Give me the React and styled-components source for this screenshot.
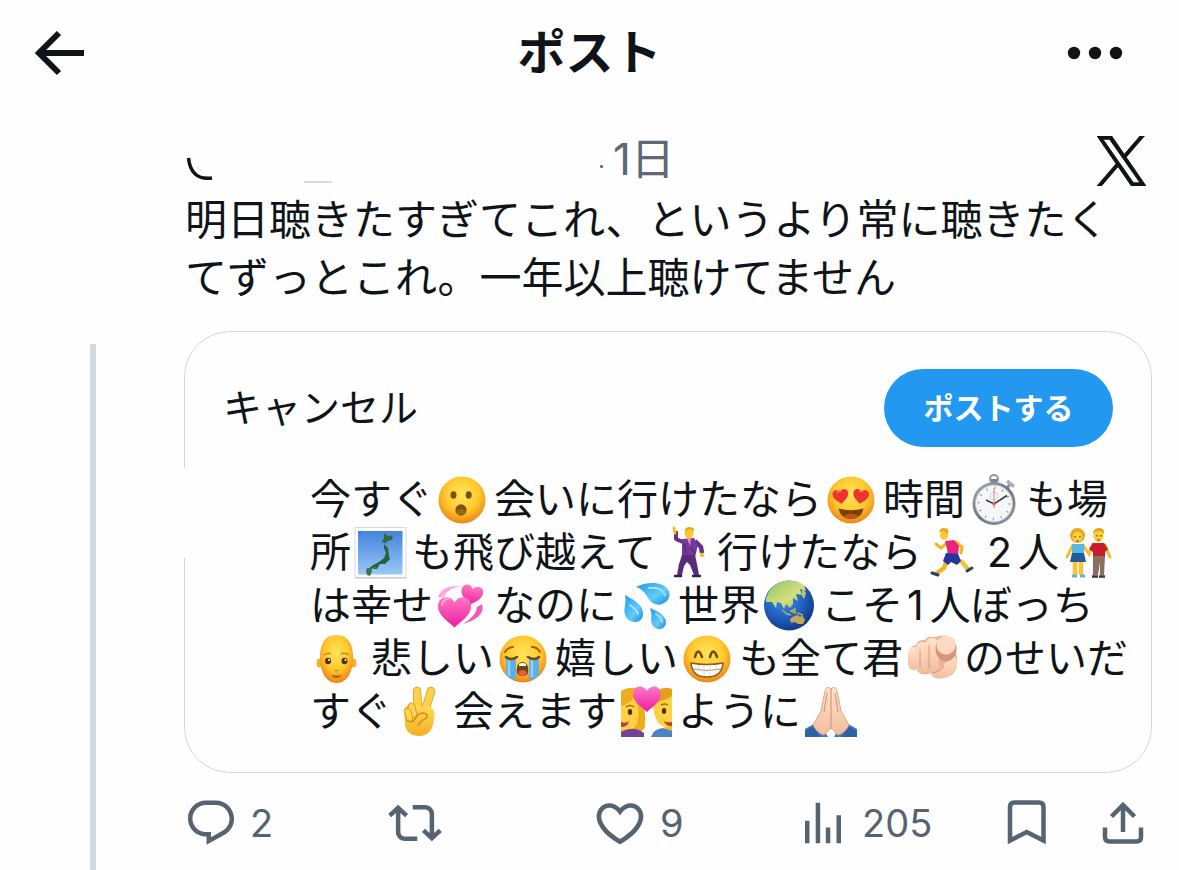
import React from "react"
import styled, { createGlobalStyle } from "styled-components"

const GlobalStyle = createGlobalStyle`
    * {
        box-sizing: border-box;
    }

    body {
        margin: 0;
        background: #fefefe;
        color: #0f1419;
        font-family: Inter, "Noto Sans CJK JP", sans-serif;
    }
`

const Page = styled.div`
    display: flex;
    flex-direction: column;
    min-height: 100vh;
`

const Header = styled.header`
    display: grid;
    grid-template-columns: 1fr auto 1fr;
    align-items: center;
    height: 106px;
    padding: 0 35px;
`

const Title = styled.h1`
    margin: 0;
    font-size: 48px;
    line-height: 58px;
    font-weight: 700;
`

const IconButton = styled.button`
    display: flex;
    align-items: center;
    gap: 12px;
    justify-self: ${props => props.$end ? "end" : "start"};
    margin: 0;
    padding: 0 ${props => props.$end ? "20px" : "0"} 0 0;
    border: 0;
    background: none;
    color: inherit;
    font: inherit;
    cursor: pointer;

    svg {
        display: block;
        flex: none;
    }
`

const Post = styled.article`
    display: flex;
    flex: 1;
    padding-right: 27px;
`

const ThreadColumn = styled.div`
    display: flex;
    flex: none;
    width: 184px;
    padding: 238px 0 0 90px;
`

const ThreadLine = styled.div`
    width: 6px;
    background: #cfd9e0;
`

const Content = styled.div`
    flex: 1;
    min-width: 0;
    padding: 25px 0 19px;
`

const Byline = styled.div`
    display: flex;
    align-items: center;
    height: 60px;
    padding-right: 6px;
    color: #5b6875;
`

const Author = styled.a`
    flex: none;
    width: 414px;
    color: #0f1419;

    svg {
        display: block;
    }
`

const Time = styled.time`
    flex: 1;
    padding-top: 4px;
    font-size: 44px;
    line-height: 56px;
`

const Dot = styled.span`
    margin-right: 8px;
    font-size: 24px;
`

const Body = styled.p`
    margin: 0;
    padding-left: 1px;
    font-size: 42px;
    line-height: 58px;
    white-space: nowrap;
`

const Card = styled.section`
    position: relative;
    margin-top: 24px;
    padding: 37px 0 34px;
    border: 1px solid #d3d6e2;
    border-radius: 46px;
`

const BorderGap = styled.span`
    position: absolute;
    top: 136px;
    left: -2px;
    width: 4px;
    height: 90px;
    background: #fefefe;
`

const CardHeader = styled.div`
    display: flex;
    align-items: center;
    justify-content: space-between;
    padding: 0 38px;
`

const CancelButton = styled.button`
    padding: 0;
    border: 0;
    background: none;
    color: inherit;
    font: inherit;
    font-size: 39px;
    line-height: 58px;
    cursor: pointer;
`

const SubmitButton = styled.button`
    width: 229px;
    height: 78px;
    padding: 0 0 4px;
    border: 0;
    border-radius: 39px;
    background: #2398f0;
    color: #fff;
    font: inherit;
    font-size: 30px;
    font-weight: 700;
    cursor: pointer;
`

const Draft = styled.div`
    margin-top: 26px;
    padding-left: 125px;
    font-size: 41px;
    line-height: 53px;
`

const DraftLine = styled.div`
    display: flex;
    align-items: center;
    height: 53px;
    white-space: nowrap;
`

const Digit = styled.span`
    padding: 0 6px 0 4px;
`

const EmojiSvg = styled.svg`
    flex: none;
    width: 52px;
    height: 52px;
    margin: 0 5px 0 4px;
    overflow: visible;
`

const Defs = styled.svg`
    position: absolute;
    width: 0;
    height: 0;
`

const Actions = styled.div`
    display: grid;
    grid-template-columns: 204fr 204fr 204fr 204fr 96fr 56fr;
    align-items: center;
    height: 56px;
    margin-top: 22px;
    color: #566370;
    font-size: 38px;
`

const Emoji = ({ label, children }) =>
    <EmojiSvg viewBox="0 0 52 52" role="img" aria-label={label}>{children}</EmojiSvg>

const HEART = "M0 -5C-3 -12 -14 -11 -14 -2C-14 6 -5 11 0 16C5 11 14 6 14 -2C14 -11 3 -12 0 -5Z"

const EmojiDefs = () =>
    <Defs aria-hidden="true">
        <defs>
            <radialGradient id="face" cx="50%" cy="38%" r="60%">
                <stop offset="0" stopColor="#ffe55c" />
                <stop offset=".6" stopColor="#ffc92e" />
                <stop offset="1" stopColor="#ef8a18" />
            </radialGradient>
            <linearGradient id="gold" x1="0" y1="0" x2="0" y2="1">
                <stop offset="0" stopColor="#ffdb57" />
                <stop offset="1" stopColor="#f2b01f" />
            </linearGradient>
            <linearGradient id="sky" x1="0" y1="0" x2="0" y2="1">
                <stop offset="0" stopColor="#4483db" />
                <stop offset="1" stopColor="#9ac9f7" />
            </linearGradient>
            <linearGradient id="pink" x1="0" y1="0" x2="0" y2="1">
                <stop offset="0" stopColor="#ff78c4" />
                <stop offset="1" stopColor="#ec1da0" />
            </linearGradient>
            <linearGradient id="water" x1="0" y1="0" x2="1" y2="1">
                <stop offset="0" stopColor="#1d9be6" />
                <stop offset=".6" stopColor="#62cbfb" />
                <stop offset="1" stopColor="#1488dc" />
            </linearGradient>
            <radialGradient id="sea" cx="40%" cy="35%" r="65%">
                <stop offset="0" stopColor="#3d93ea" />
                <stop offset=".6" stopColor="#2160c2" />
                <stop offset="1" stopColor="#153b86" />
            </radialGradient>
            <linearGradient id="land" x1="0" y1="0" x2="1" y2="1">
                <stop offset="0" stopColor="#8cc66a" />
                <stop offset=".6" stopColor="#d8df7c" />
                <stop offset="1" stopColor="#9fb65a" />
            </linearGradient>
            <linearGradient id="pale" x1="0" y1="0" x2="0" y2="1">
                <stop offset="0" stopColor="#ffe3cd" />
                <stop offset="1" stopColor="#f3bd9e" />
            </linearGradient>
            <linearGradient id="steel" x1="0" y1="0" x2="1" y2="1">
                <stop offset="0" stopColor="#a9b0b7" />
                <stop offset=".5" stopColor="#6a737b" />
                <stop offset="1" stopColor="#939aa2" />
            </linearGradient>
        </defs>
    </Defs>

const Face = () => <circle cx="25" cy="26" r="23.5" fill="url(#face)" />

const Surprised = () =>
    <Emoji label="😮">
        <Face />
        <ellipse cx="16.5" cy="21" rx="3" ry="3.8" fill="#76500c" />
        <ellipse cx="31.7" cy="21" rx="3" ry="3.8" fill="#76500c" />
        <ellipse cx="24" cy="36" rx="5.6" ry="5.8" fill="#7d5208" />
        <ellipse cx="24" cy="38" rx="4" ry="3" fill="#98670f" />
    </Emoji>

const HeartEyes = () =>
    <Emoji label="😍">
        <Face />
        <path d={HEART} transform="translate(14.5 21) rotate(-8) scale(.56)" fill="#f0322f" />
        <path d={HEART} transform="translate(35 21) rotate(8) scale(.56)" fill="#f0322f" />
        <path d="M11 19q1-3 4-2M33 18q2-2 4 0" fill="none" stroke="#ff7b70" strokeWidth="1.5" />
        <path d="M12.500 34.500Q25 38 37.500 34.500Q35.500 45 25 45Q14.500 45 12.500 34.500Z" fill="#754306" />
        <path d="M17 42Q25 37.500 33 42Q25 47 17 42Z" fill="#c25220" />
    </Emoji>

const Stopwatch = () =>
    <Emoji label="⏱️">
        <circle cx="25" cy="5" r="4" fill="none" stroke="#9198a0" strokeWidth="2" />
        <path d="M22 5h6v5h-6z" fill="#7d848c" />
        <path d="M38 14l4-5" stroke="#858d95" strokeWidth="3" />
        <path d="M39 5.500l7 5.500-2 3-7-5.500z" fill="#a8afb6" />
        <circle cx="25" cy="29.500" r="21.500" fill="url(#steel)" />
        <circle cx="25" cy="29.500" r="18.500" fill="#f5f6f7" stroke="#bfc4ca" />
        <circle cx="25" cy="29.500" r="15.500" fill="none" stroke="#8b9094" strokeWidth="2.500" strokeDasharray="1 7.115" />
        <circle cx="25" cy="22" r="4" fill="none" stroke="#d2d5d9" />
        <path d="M25 34V14" stroke="#e77c68" strokeWidth="1" />
        <path d="M17 26l8 4 13-8.500" fill="none" stroke="#33383d" strokeWidth="1.500" />
        <circle cx="25" cy="30" r="1.600" fill="#d36b4b" />
    </Emoji>

const MapOfJapan = () =>
    <Emoji label="🗾">
        <rect x="0" y=".5" width="51" height="50" fill="#fff" stroke="#d7d9dd" />
        <path d="M0 51h51" stroke="#bfc3c8" />
        <rect x="3" y="4" width="44.500" height="43.500" fill="url(#sky)" />
        <path d="M29 6l4 3 5-.5-1 4-5 2-2 2-3-2 2-3z" fill="#2f6b3c" />
        <path d="M29 17l4 4 1 8 1 3-5 5-5 0-3 5-4-1-4 3-2-1 6-5 6-3 5-4 2-5-2-5z" fill="#28623b" />
        <path d="M12 41l4 0 1 3-2 5-3-1-1-4zM18 40l4-1-1 3-3 0z" fill="#37764a" />
    </Emoji>

const Dancer = () =>
    <Emoji label="🕺">
        <g strokeLinejoin="round">
            <path d="M16 4l0 8 9 4" fill="none" stroke="#63318a" strokeWidth="4" />
            <path d="M15 6l-1-5" stroke="#f6bd28" strokeWidth="3" strokeLinecap="round" />
            <path d="M35 14l6 6 1 6" fill="none" stroke="#63318a" strokeWidth="4.500" />
            <circle cx="42" cy="28" r="2.200" fill="#f6bd28" />
            <path d="M22 12l12-1 4 7-3 12H22z" fill="#70399a" />
            <path d="M27 11l4 0-1 8z" fill="#ed8bd0" />
            <path d="M22 28h13l2 9 2 11h-5l-4-10-3-3-3 4-2 9h-5l2-11z" fill="#582b7b" />
            <path d="M24 17l2 9M31 20l4 7" stroke="#4b226d" strokeWidth="1" />
            <path d="M15 49h6M33 49h7" stroke="#39213d" strokeWidth="2.500" strokeLinecap="round" />
            <ellipse cx="29" cy="6" rx="4.500" ry="5.500" fill="#fbc52b" />
            <path d="M25 4q0-4 5-4 5 1 4 4l-4-2z" fill="#dda715" />
        </g>
    </Emoji>

const Runner = () =>
    <Emoji label="🏃">
        <g fill="none" strokeLinejoin="round" strokeLinecap="round">
            <path d="M20 17l-5 4-5-4" stroke="#f4b322" strokeWidth="3" />
            <path d="M30 15l6 5-1 6" stroke="#f4b322" strokeWidth="3" />
            <path d="M21 33l-3 8-7 5" stroke="#f4b322" strokeWidth="4.500" />
            <path d="M29 33l7 2 6 7" stroke="#f9c136" strokeWidth="4.500" />
            <path d="M6 46l6 2M41 44l5-3" stroke="#2d3e63" strokeWidth="3" />
        </g>
        <path d="M19 14l9-1 5 6-1 9-10 0-1-6z" fill="#e72579" />
        <path d="M20 26l12 1 3 7-4 4-6-3-3 3-5-4z" fill="#25359d" />
        <ellipse cx="18" cy="8" rx="4.200" ry="4.800" fill="#ffc83b" />
        <path d="M13 5q1-4 5-4 6 0 4 6l-4-3z" fill="#eaaa17" />
    </Emoji>

const Couple = () =>
    <Emoji label="👫">
        <path d="M10 18l-6 12M20 18l6 9 4-10M42 18l5 12" fill="none" stroke="#f6bd2c" strokeWidth="3" strokeLinecap="round" />
        <path d="M12 34v14M18 34v14" stroke="#f8c339" strokeWidth="4.500" />
        <path d="M9 49h5M17 49h5" stroke="#6faecd" strokeWidth="3" />
        <circle cx="14.500" cy="8.500" r="7.500" fill="#e6aa17" />
        <ellipse cx="14.500" cy="10" rx="4.800" ry="5.500" fill="#ffcf45" />
        <path d="M9 17h12l0 10H9z" fill="#56b9e3" />
        <path d="M9 26h12l2 9H7z" fill="#225b9a" />
        <path d="M30 16h11l4 6-3 3v5H30v-5l-4-3z" fill="#c81b2b" />
        <path d="M30 29h12l-1 19h-4V35l-2 13h-5z" fill="#8d6c62" />
        <path d="M29 49.500h6M36 49.500h6" stroke="#46302c" strokeWidth="2.500" />
        <ellipse cx="35.500" cy="8.500" rx="5.200" ry="6.500" fill="#ffcb3c" />
        <path d="M30 7q0-6 6-6 6 0 5 6l-3-3-5 0z" fill="#dfa318" />
        <path d="M12 9v1.500M17 9v1.500M34 8v1.500M38 8v1.500M13 14h3M34 13h3" stroke="#6d470c" strokeWidth="1.200" />
    </Emoji>

const RevolvingHearts = () =>
    <Emoji label="💞">
        <path d="M1 17Q5 5 24 6Q9 9 7 17Z" fill="#ffa7d8" />
        <path d="M45 24Q49 37 26 44Q40 35 40 27Z" fill="#f35bb9" />
        <path d={HEART} transform="translate(35 13) rotate(12) scale(.78)" fill="url(#pink)" />
        <path d={HEART} transform="translate(17.500 28.500) scale(1.180)" fill="url(#pink)" />
        <path d="M5 25q1-6 6-6" fill="none" stroke="#ffa4db" strokeWidth="2" strokeLinecap="round" />
    </Emoji>

const SweatDrops = () =>
    <Emoji label="💦">
        <path d="M15 7C26 1 43 1 48 11C51 20 41 27 34 24C26 22 27 11 15 7Z" fill="url(#water)" />
        <path d="M4 15C13 20 23 25 22 35C21 44 9 44 5 37C1 30 6 25 4 15Z" fill="url(#water)" />
        <path d="M29 28C37 31 46 36 45 43C44 51 33 51 31 44C29 39 32 36 29 28Z" fill="url(#water)" />
        <path d="M28 8q12-2 16 7M9 25q7 5 8 9M35 34q5 3 6 8" fill="none" stroke="#a5e0fd" strokeWidth="2" strokeLinecap="round" />
    </Emoji>

const Globe = () =>
    <Emoji label="🌏">
        <circle cx="25" cy="25.500" r="25" fill="url(#sea)" />
        <path d="M2 18Q7 4 20 1Q32 0 40 5L42 11L36 9L38 15L32 14L34 21L29 18L29 24L26 28L22 24L20 29L17 23L13 22L12 28L8 22L2 22Z" fill="url(#land)" />
        <path d="M38 8l4 5-2 6-2-3z" fill="#b6cf6b" />
        <path d="M18 30l5 4 4 1M27 31l4-2 0 4zM33 33l6 2" fill="none" stroke="#a9b65b" strokeWidth="1.500" />
        <path d="M26 39l4-3 4-1 2 2 2-2 3 5-2 4-5 0-3-2-4 1z" fill="#c2a65a" />
    </Emoji>

const Bald = () =>
    <Emoji label="🧑‍🦲">
        <ellipse cx="5.500" cy="30" rx="3" ry="4.500" fill="#f3b12b" />
        <ellipse cx="39.500" cy="30" rx="3" ry="4.500" fill="#f3b12b" />
        <path d="M22.500 2C34 2 39 11 39 24C39 39 33 50 22.500 50C12 50 6 39 6 24C6 11 11 2 22.500 2Z" fill="url(#face)" />
        <ellipse cx="14" cy="28" rx="3" ry="3.300" fill="#4d3214" />
        <ellipse cx="30.500" cy="28" rx="3" ry="3.300" fill="#4d3214" />
        <circle cx="15" cy="27" r="1" fill="#fff" />
        <circle cx="31.500" cy="27" r="1" fill="#fff" />
        <path d="M10 22q4-3 7-1M27 21q4-2 8 1M20.500 37q2 1.500 4 0" fill="none" stroke="#cc8b16" strokeWidth="1.500" />
        <path d="M17.500 42q5 1 10 0-1 3-5 3t-5-3z" fill="#b15a22" />
    </Emoji>

const Crying = () =>
    <Emoji label="😭">
        <Face />
        <path d="M8 25h10v22Q12 46 8 42ZM31 25h10v17Q37 46 31 47Z" fill="#5cafe9" />
        <path d="M11 26v17M34 26v18" stroke="#90d0f8" strokeWidth="2.500" />
        <path d="M8 24q5 4 11 0M30 24q6 4 11 0" fill="none" stroke="#6f4a12" strokeWidth="2.500" strokeLinecap="round" />
        <path d="M7 19q3-5 8-5M34 14q5 0 8 5" fill="none" stroke="#9a6412" strokeWidth="2" strokeLinecap="round" />
        <path d="M24.500 29C29 29 31 34 30 40C29 44 20 44 19 40C18 34 20 29 24.500 29Z" fill="#70440b" />
        <path d="M20 39q4.500-4 9 0-1 4-4.500 4t-4.500-4z" fill="#e45a4b" />
        <path d="M21 31q3.500-2 7 0v2h-7z" fill="#fff" />
    </Emoji>

const Grinning = () =>
    <Emoji label="😁">
        <Face />
        <path d="M13 24q3-11 7 0M28 24q3-11 7 0" fill="none" stroke="#744b0c" strokeWidth="2.600" strokeLinecap="round" />
        <path d="M9 30Q25 33 41 30Q40 44 25 44Q10 44 9 30Z" fill="#fff" stroke="#8a5c18" strokeWidth="1.500" strokeLinejoin="round" />
        <path d="M11 36Q25 39 39 36" fill="none" stroke="#a99474" strokeWidth="1" />
        <path d="M16 32v9M22 33v10M28 33v10M34 32v9" stroke="#ded8cf" strokeWidth="1" />
    </Emoji>

const PointingAtViewer = () =>
    <Emoji label="🫵🏻">
        <path d="M2 21Q1 14 9 12Q10 7 18 7Q20 3 28 4Q38 0 47 6L50 25Q52 42 36 45Q25 47 24 40Q13 44 9 36Q0 34 2 21Z" fill="#eeb294" />
        <rect x="1" y="14" width="12" height="23" rx="6" fill="url(#pale)" />
        <rect x="9" y="9" width="13" height="31" rx="6" fill="url(#pale)" />
        <rect x="18" y="5" width="14" height="34" rx="7" fill="url(#pale)" />
        <path d="M25 40Q34 38 37 31L48 23Q53 34 46 41Q38 47 28 44Q24 43 25 40Z" fill="url(#pale)" />
        <ellipse cx="39" cy="16" rx="10.500" ry="12.500" fill="#d99578" />
        <ellipse cx="39" cy="12" rx="9.500" ry="9.500" fill="#ffdac2" />
        <path d="M13 17v18M22 12v24M25 40q10-1 12-8" fill="none" stroke="#d89a7c" strokeWidth="1" />
    </Emoji>

const Victory = () =>
    <Emoji label="✌️">
        <path d="M22 25L21 5M29 25L35 5" stroke="#d99c1d" strokeWidth="8.500" strokeLinecap="round" />
        <path d="M22 25L21 5M29 25L35 5" stroke="#ffd04a" strokeWidth="7" strokeLinecap="round" />
        <path d="M8 24Q10 17 17 19L33 21Q40 23 38 32Q37 49 24 50Q10 50 9 38Z" fill="url(#gold)" />
        <path d="M13 18q4-3 6 2l2 9q-2 4-6 2l-4-7z" fill="#ffd352" stroke="#d99c1d" />
        <path d="M8 24q4-4 7 1l2 8q-2 4-6 2z" fill="#ffd352" stroke="#d99c1d" />
        <path d="M11 34q5 4 8-1 4-8 11-5 3 2-1 5-5 2-7 7" fill="none" stroke="#d1921c" strokeWidth="1.600" />
    </Emoji>

const CoupleWithHeart = () =>
    <Emoji label="💑">
        <path d="M0 5Q10-1 19 4Q25 16 24 41L17 50H0Z" fill="#edae1c" />
        <path d="M0 20Q8 18 14 11Q20 24 16 38Q11 47 0 43Z" fill="#ffd045" />
        <path d="M0 46Q12 39 23 47V51H0Z" fill="#75419b" />
        <path d="M51 4Q39-1 34 10Q30 24 36 35Q41 43 51 42Z" fill="#ffd045" />
        <path d="M51 3Q37-2 33 15Q41 17 51 10Z" fill="#e1a116" />
        <path d="M30 51Q32 43 42 42L51 44V51Z" fill="#4b83c6" />
        <path d="M42 42l9 3v-6z" fill="#f5b92a" />
        <ellipse cx="9" cy="26" rx="2.200" ry="3" fill="#4f3515" />
        <ellipse cx="43" cy="25" rx="2.200" ry="3" fill="#4f3515" />
        <path d="M5 21q4-3 8 0M40 19q4-2 7 0" fill="none" stroke="#a06d14" strokeWidth="1.500" />
        <path d="M0 36q5 2 8-1-1 6-8 6zM51 36q-5 1-8-1 1 5 8 5z" fill="#b1452f" />
        <path d={HEART} transform="translate(26 10)" fill="url(#pink)" />
    </Emoji>

const Pray = () =>
    <Emoji label="🙏🏻">
        <path d="M0 43L14 35L23 51H0ZM52 43L38 35L29 51H52Z" fill="#3b78bd" />
        <path d="M0 45l9-5 6 11H0zM52 45l-9-5-6 11h15z" fill="#2c62a5" />
        <path d="M26 3Q22-1 20 5L16 25L8 39Q12 47 19 49L26 42L33 49Q40 47 44 39L36 25L32 5Q30-1 26 3Z" fill="url(#pale)" stroke="#dfa384" />
        <path d="M26 3V42M22 7l-3 19M30 7l3 19" fill="none" stroke="#d79878" strokeWidth="1.200" />
    </Emoji>

const BackArrow = () =>
    <svg width="50" height="46" viewBox="0 0 50 46" fill="none" stroke="currentColor" strokeWidth="6">
        <path d="M24 3L4 23L24 43M4 23H49" />
    </svg>

const MoreDots = () =>
    <svg width="58" height="14" viewBox="0 0 58 14" fill="currentColor">
        <circle cx="8" cy="7" r="6.200" />
        <circle cx="29" cy="7" r="6.200" />
        <circle cx="50" cy="7" r="6.200" />
    </svg>

const XLogo = () =>
    <svg width="49" height="50" viewBox="0 0 1200 1227" fill="#0f1419" stroke="#0f1419" strokeWidth="24" role="img" aria-label="X">
        <path d="M714.163 519.284L1160.89 0H1055.03L667.137 450.887L357.328 0H0L468.492 681.821L0 1226.37H105.866L515.491 750.218L842.672 1226.37H1200L714.137 519.284H714.163ZM569.165 687.828L521.697 619.934L144.011 79.6944H306.615L611.412 515.685L658.88 583.579L1055.08 1150.3H892.476L569.165 687.854V687.828Z" />
    </svg>

const NameMark = () =>
    <svg width="150" height="60" viewBox="0 0 150 60" fill="none">
        <path d="M4.500 27C6 41 13 49 28 47" stroke="currentColor" strokeWidth="3.500" />
        <path d="M13 36l4 4" stroke="#ddd" />
        <path d="M120 51h28" stroke="#d8d9db" strokeWidth="2" />
    </svg>

const ICONS = {
    reply: "M1.751 10c0-4.42 3.584-8 8.005-8h4.366c4.49 0 8.129 3.64 8.129 8.13 0 2.96-1.607 5.68-4.196 7.11l-8.054 4.46v-3.69h-.067c-4.49.1-8.183-3.51-8.183-8.01zm8.005-6c-3.317 0-6.005 2.69-6.005 6 0 3.37 2.77 6.08 6.138 6.01l.351-.01h1.761v2.3l5.087-2.81c1.951-1.08 3.163-3.13 3.163-5.36 0-3.39-2.744-6.13-6.129-6.13H9.756z",
    repost: "M4.5 3.88l4.432 4.14-1.364 1.46L5.5 7.55V16c0 1.1.896 2 2 2H13v2H7.5c-2.209 0-4-1.79-4-4V7.55L1.432 9.48.068 8.02 4.5 3.88zM16.5 6H11V4h5.5c2.209 0 4 1.79 4 4v8.45l2.068-1.93 1.364 1.46-4.432 4.14-4.432-4.14 1.364-1.46 2.068 1.93V8c0-1.1-.896-2-2-2z",
    like: "M16.697 5.5c-1.222-.06-2.679.51-3.89 2.16l-.805 1.09-.806-1.09C9.984 6.01 8.526 5.44 7.304 5.5c-1.243.07-2.349.78-2.91 1.91-.552 1.12-.633 2.78.479 4.82 1.074 1.97 3.257 4.27 7.129 6.61 3.87-2.34 6.052-4.64 7.126-6.61 1.111-2.04 1.03-3.7.477-4.82-.561-1.13-1.666-1.84-2.908-1.91zm4.187 7.69c-1.351 2.48-4.001 5.12-8.379 7.67l-.503.3-.504-.3c-4.379-2.55-7.029-5.19-8.382-7.67-1.36-2.5-1.41-4.86-.514-6.67.887-1.79 2.647-2.91 4.601-3.01 1.651-.09 3.368.56 4.798 2.01 1.429-1.45 3.146-2.1 4.796-2.01 1.954.1 3.714 1.22 4.601 3.01.896 1.81.846 4.17-.514 6.67z",
    views: "M8.75 21V3h2v18h-2zM18 21V8.5h2V21h-2zM4 21l.004-10h2L6 21H4zm9.248 0v-7h2v7h-2z"
}

const Icon = ({ name, size = 54 }) =>
    <svg width={size} height={size} viewBox="0 0 24 24" fill="currentColor">
        <path d={ICONS[name]} />
    </svg>

const BookmarkIcon = () =>
    <svg width="54" height="54" viewBox="0 0 54 54" fill="none" stroke="currentColor" strokeWidth="4.500">
        <path d="M10 44.500V11Q10 6.500 14.500 6.500H39Q43.500 6.500 43.500 11V44.500L26.750 36Z" />
    </svg>

const ShareIcon = () =>
    <svg width="54" height="54" viewBox="0 0 54 54" fill="none" stroke="currentColor" strokeWidth="4.500">
        <path d="M27 36V9M15.500 20.500L27 9L38.500 20.500M9 31.500V41Q9 45.500 13.500 45.500H40.500Q45 45.500 45 41V31.500" />
    </svg>

const App = () =>
    <Page>
        <GlobalStyle />
        <EmojiDefs />

        <Header>
            <IconButton aria-label="戻る"><BackArrow /></IconButton>
            <Title>ポスト</Title>
            <IconButton $end aria-label="もっと見る"><MoreDots /></IconButton>
        </Header>

        <Post>
            <ThreadColumn><ThreadLine /></ThreadColumn>

            <Content>
                <Byline>
                    <Author href="#" aria-label="プロフィール"><NameMark /></Author>
                    <Time><Dot>·</Dot>1日</Time>
                    <XLogo />
                </Byline>

                <Body>
                    明日聴きたすぎてこれ、というより常に聴きたく<br />
                    てずっとこれ。一年以上聴けてません
                </Body>

                <Card>
                    <BorderGap />
                    <CardHeader>
                        <CancelButton>キャンセル</CancelButton>
                        <SubmitButton>ポストする</SubmitButton>
                    </CardHeader>

                    <Draft>
                        <DraftLine>今すぐ<Surprised />会いに行けたなら<HeartEyes />時間<Stopwatch />も場</DraftLine>
                        <DraftLine>所<MapOfJapan />も飛び越えて<Dancer />行けたなら<Runner /><Digit>2</Digit>人<Couple /></DraftLine>
                        <DraftLine>は幸せ<RevolvingHearts />なのに<SweatDrops />世界<Globe />こそ<Digit>1</Digit>人ぼっち</DraftLine>
                        <DraftLine><Bald />悲しい<Crying />嬉しい<Grinning />も全て君<PointingAtViewer />のせいだ</DraftLine>
                        <DraftLine>すぐ<Victory />会えます<CoupleWithHeart />ように<Pray /></DraftLine>
                    </Draft>
                </Card>

                <Actions>
                    <IconButton aria-label="返信 2"><Icon name="reply" />2</IconButton>
                    <IconButton aria-label="リポスト"><Icon name="repost" /></IconButton>
                    <IconButton aria-label="いいね 9"><Icon name="like" size={56} />9</IconButton>
                    <IconButton aria-label="表示 205"><Icon name="views" />205</IconButton>
                    <IconButton aria-label="ブックマーク"><BookmarkIcon /></IconButton>
                    <IconButton aria-label="共有"><ShareIcon /></IconButton>
                </Actions>
            </Content>
        </Post>
    </Page>

export default App
